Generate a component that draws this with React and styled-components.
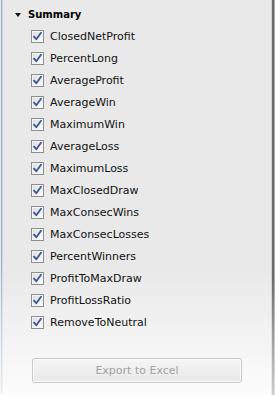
import React from "react";
import styled, { createGlobalStyle } from "styled-components";

const GlobalStyle = createGlobalStyle`
  html, body {
    margin: 0;
    padding: 0;
    background: #ffffff;
  }
  body {
    font-family: "DejaVu Sans", Tahoma, sans-serif;
  }
`;

const fields = [
  "ClosedNetProfit",
  "PercentLong",
  "AverageProfit",
  "AverageWin",
  "MaximumWin",
  "AverageLoss",
  "MaximumLoss",
  "MaxClosedDraw",
  "MaxConsecWins",
  "MaxConsecLosses",
  "PercentWinners",
  "ProfitToMaxDraw",
  "ProfitLossRatio",
  "RemoveToNeutral",
];

const CheckBox = () => (
  <Box>
    <svg width="11" height="11" viewBox="0 0 11 11">
      <path
        d="M2 5.6 L4.3 8.2 L9 1.8"
        fill="none"
        stroke="#3d5a9e"
        strokeWidth="1.9"
        strokeLinecap="round"
        strokeLinejoin="round"
      />
    </svg>
  </Box>
);

const App = () => {
  return (
    <>
      <GlobalStyle />
      <Window>
        <LeftEdge />
        <Content>
          <Header>
            <Arrow />
            <span>Summary</span>
          </Header>
          <List>
            {fields.map((f) => (
              <Row key={f}>
                <CheckBox />
                <Label>{f}</Label>
              </Row>
            ))}
          </List>
          <ExportButton disabled>Export to Excel</ExportButton>
        </Content>
        <RightEdge />
      </Window>
    </>
  );
};

const Window = styled.div`
  width: 275px;
  height: 395px;
  display: flex;
  background: linear-gradient(
    to bottom,
    #e9e9e9 0%,
    #e9e9e9 68%,
    #f3f3f3 85%,
    #fcfcfc 100%
  );
  overflow: hidden;
`;

const LeftEdge = styled.div`
  width: 3px;
  flex: none;
  background: linear-gradient(
      to bottom,
      rgba(250, 250, 250, 0) 65%,
      rgba(250, 250, 250, 0.85) 100%
    ),
    linear-gradient(
      to right,
      #e2e7ee 0 1px,
      #9dafc4 1px 2px,
      #cdd7e3 2px 3px
    );
`;

const RightEdge = styled.div`
  width: 4px;
  flex: none;
  background: linear-gradient(
      to bottom,
      rgba(250, 250, 250, 0) 70%,
      rgba(250, 250, 250, 0.7) 100%
    ),
    linear-gradient(
      to right,
      #d2d2d2 0 1px,
      #6b6b6b 1px 3px,
      #a8a8a8 3px 4px
    );
`;

const Content = styled.div`
  flex: 1;
  display: flex;
  flex-direction: column;
  padding-top: 4px;
`;

const Header = styled.div`
  height: 21px;
  display: flex;
  align-items: center;
  padding-left: 12px;
  gap: 7px;
  font-size: 10px;
  font-weight: bold;
  color: #000;
`;

const Arrow = styled.span`
  width: 0;
  height: 0;
  border-left: 3px solid transparent;
  border-right: 3px solid transparent;
  border-top: 4px solid #111;
  margin-top: 1px;
`;

const List = styled.div`
  display: flex;
  flex-direction: column;
`;

const Row = styled.div`
  height: 22px;
  display: flex;
  align-items: center;
  padding-left: 28px;
`;

const Box = styled.span`
  width: 13px;
  height: 13px;
  box-sizing: border-box;
  border: 1px solid #8e8f8f;
  background: linear-gradient(135deg, #dcdcdc 0%, #f2f2f2 60%, #fbfbfb 100%);
  box-shadow: inset 0 0 0 1px #f4f4f4;
  display: flex;
  align-items: center;
  justify-content: center;
  flex: none;
`;

const Label = styled.span`
  margin-left: 6px;
  font-size: 11px;
  color: #111;
  line-height: 13px;
`;

const ExportButton = styled.button`
  margin: 25px 0 0 29px;
  width: 210px;
  height: 25px;
  box-sizing: border-box;
  border: 1px solid #c8c8c8;
  border-radius: 3px;
  background: linear-gradient(to bottom, #f5f5f5 0%, #efefef 50%, #e9e9e9 100%);
  box-shadow: inset 0 0 0 1px #fbfbfb;
  font-family: "DejaVu Sans", Tahoma, sans-serif;
  font-size: 11px;
  color: #a2a2a2;
  padding: 0;
`;

export default App;
